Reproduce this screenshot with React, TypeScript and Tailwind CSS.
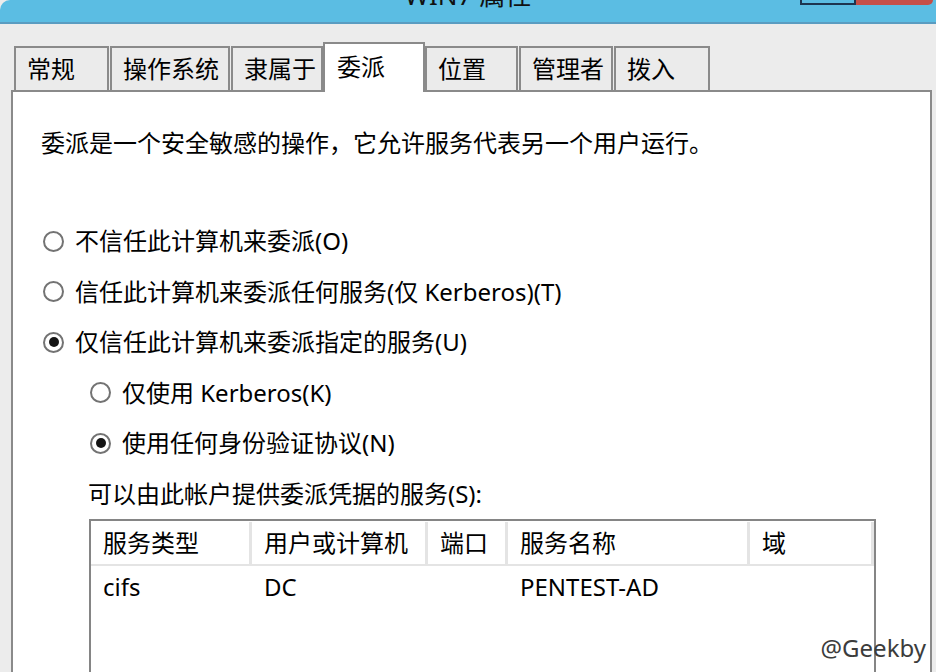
import React from 'react';

const tabs = [
  { label: '常规', cls: 'w-[95px]' },
  { label: '操作系统', cls: 'ml-px w-[120px]' },
  { label: '隶属于', cls: 'ml-px w-[92px]' },
  { label: '委派', cls: 'w-[102px]', active: true },
  { label: '位置', cls: 'w-[93px]' },
  { label: '管理者', cls: 'ml-px w-[94px]' },
  { label: '拨入', cls: 'ml-px w-[96px]' },
];

const columns = [
  { label: '服务类型', cls: 'w-[161px]' },
  { label: '用户或计算机', cls: 'w-[176px]' },
  { label: '端口', cls: 'w-[80px]' },
  { label: '服务名称', cls: 'w-[242px]' },
  { label: '域', cls: 'flex-1' },
];

const rows = [['cifs', 'DC', '', 'PENTEST-AD', '']];

function Radio({ checked }: { checked?: boolean }) {
  return (
    <span className="flex h-[21px] w-[21px] shrink-0 items-center justify-center rounded-full border-2 border-[#737373] bg-white">
      {checked && <span className="h-[10px] w-[10px] rounded-full bg-[#141414]" />}
    </span>
  );
}

function Option({ label, checked, indent }: { label: string; checked?: boolean; indent?: boolean }) {
  return (
    <div className={`flex h-[50.5px] items-center gap-[11px] ${indent ? 'pl-[77px]' : 'pl-[30px]'}`}>
      <Radio checked={checked} />
      <span>{label}</span>
    </div>
  );
}

export default function App() {
  return (
    <div className="relative flex h-[672px] w-[936px] flex-col overflow-hidden bg-[#ececec] font-['Noto_Sans','Noto_Sans_CJK_SC',sans-serif] text-[24px] leading-[30px] text-black">
      {/* title bar, mostly cut off at the top */}
      <div className="relative flex h-[24px] shrink-0 justify-center overflow-hidden rounded-tl-[10px] border-b-2 border-[#5a9cc1] bg-[#5bbde3]">
        <span className="-mt-[17px] text-[26px] leading-[24px] text-[#111]">WIN7 属性</span>
        <div className="absolute left-[800px] top-0 flex">
          <div className="h-[5px] w-[56px] border-2 border-t-0 border-[#1d3550]" />
          <div className="h-[5px] w-[77px] rounded-br-[6px] bg-[#c54f48]" />
        </div>
      </div>

      {/* tabs */}
      <div className="flex h-[66px] shrink-0 items-end pl-[14px]">
        {tabs.map((t) =>
          t.active ? (
            <div
              key={t.label}
              className={`relative z-10 -mb-[2px] flex h-[50px] items-start border-2 border-b-0 border-[#8a8a8a] bg-white pl-[12px] pt-[8px] ${t.cls}`}
            >
              {t.label}
            </div>
          ) : (
            <div
              key={t.label}
              className={`flex h-[44px] items-center border-2 border-b-0 border-[#8a8a8a] bg-[#ebebeb] pl-[11px] ${t.cls}`}
            >
              {t.label}
            </div>
          )
        )}
      </div>

      {/* page */}
      <div className="ml-[11px] mr-[4px] flex-1 border-2 border-b-0 border-[#8a8a8a] bg-white">
        <p className="pl-[28px] pt-[36px]">委派是一个安全敏感的操作，它允许服务代表另一个用户运行。</p>

        <div className="mt-[58px]">
          <Option label="不信任此计算机来委派(O)" />
          <Option label="信任此计算机来委派任何服务(仅 Kerberos)(T)" />
          <Option label="仅信任此计算机来委派指定的服务(U)" checked />
          <Option label="仅使用 Kerberos(K)" indent />
          <Option label="使用任何身份验证协议(N)" indent checked />
          <div className="flex h-[50.5px] items-center pl-[75px]">可以由此帐户提供委派凭据的服务(S):</div>
        </div>

        <div className="ml-[76px] h-[200px] w-[787px] border-2 border-b-0 border-[#858585] bg-white pt-px">
          <div className="flex h-[44px]">
            {columns.map((c) => (
              <div
                key={c.label}
                className={`flex items-center border-b-2 border-r-[3px] border-[#e4e4e4] pl-3 ${c.cls}`}
              >
                {c.label}
              </div>
            ))}
          </div>
          {rows.map((r, i) => (
            <div key={i} className="flex h-[42px]">
              {r.map((cell, j) => (
                <div key={j} className={`flex items-center pl-3 ${columns[j].cls}`}>
                  {cell}
                </div>
              ))}
            </div>
          ))}
        </div>
      </div>

      <span className="absolute bottom-[9px] right-[10px] text-[#3c3c3c]">@Geekby</span>
    </div>
  );
}
